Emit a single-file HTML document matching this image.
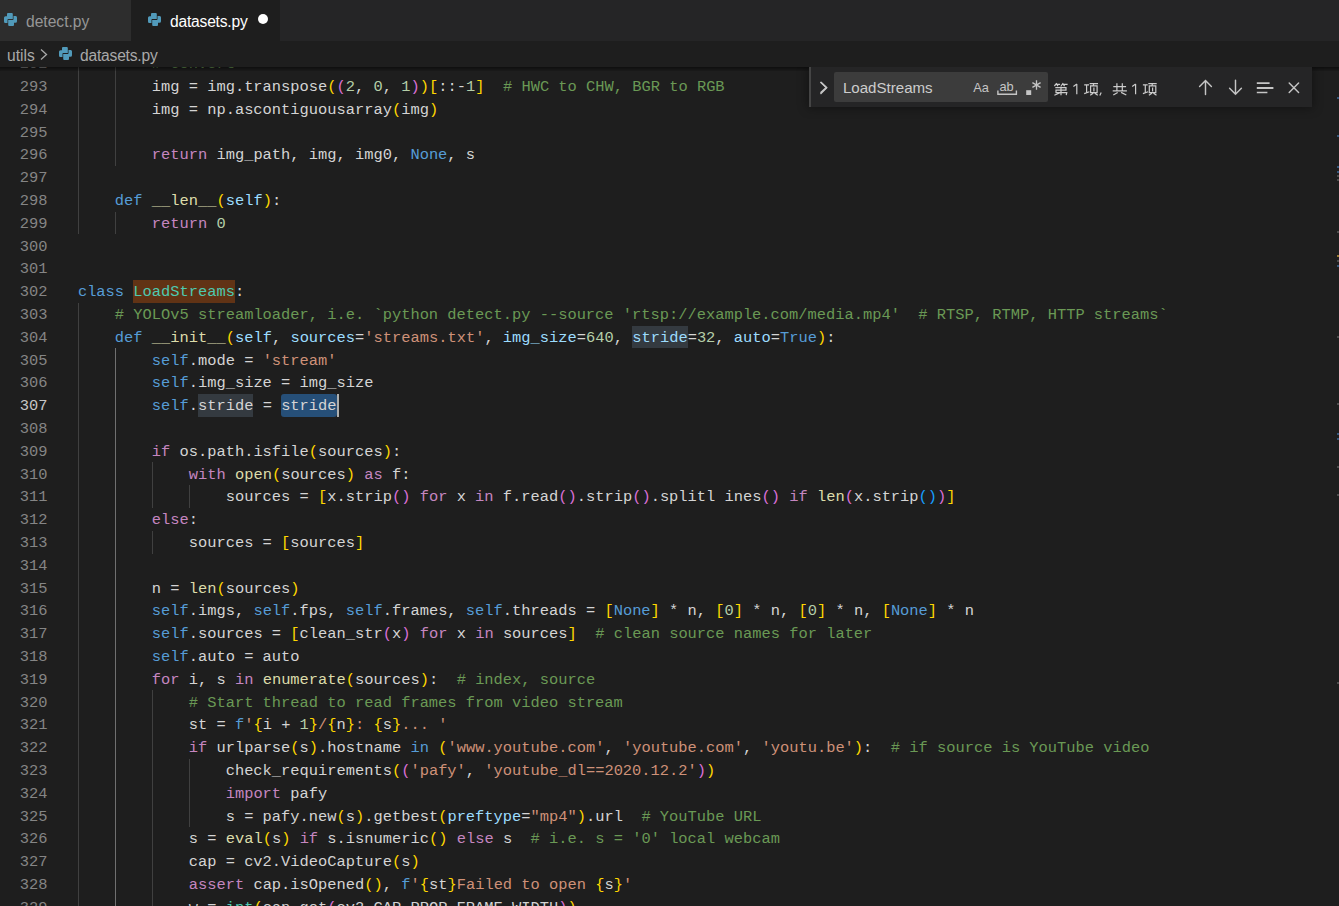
<!DOCTYPE html>
<html><head><meta charset="utf-8"><style>
*{margin:0;padding:0;box-sizing:border-box}
html,body{width:1339px;height:906px;overflow:hidden;background:#1e1e1e}
body{position:relative;font-family:"Liberation Sans",sans-serif}
#tabs{position:absolute;left:0;top:0;width:1339px;height:41px;background:#252526}
.tab{position:absolute;top:0;height:41px}
.tab svg{position:absolute;top:13px}
.tab .lbl{position:absolute;top:11.7px;font-size:15.6px;line-height:20px;white-space:pre}
#t1{left:0;width:131px;background:#2d2d2d}
#t1 svg{left:4px}
#t1 .lbl{left:26px;color:#969696}
#t2{left:131px;width:149px;background:#1e1e1e}
#t2 svg{left:17px}
#t2 .lbl{left:39px;color:#ffffff}
#t2 .dot{position:absolute;left:126.8px;top:13.8px;width:10.6px;height:10.6px;border-radius:50%;background:#ffffff}
#bc{position:absolute;left:0;top:41px;width:1339px;height:26px;background:#1e1e1e}
#bc .lbl{position:absolute;top:4.5px;font-size:15.6px;line-height:20px;color:#a9a9a9;white-space:pre}
#bc svg{position:absolute}
#ed{position:absolute;left:0;top:67px;width:1339px;height:839px;overflow:hidden;background:#1e1e1e}
.ln{position:absolute;left:0;width:47.5px;text-align:right;height:22.8px;line-height:22.8px;font-family:"Liberation Mono",monospace;font-size:15.4px;color:#858585;white-space:pre}
.ln.act{color:#c6c6c6}
.cl{position:absolute;left:77.9px;height:22.8px;line-height:22.8px;font-family:"Liberation Mono",monospace;font-size:15.4px;color:#d4d4d4;white-space:pre}
.ig{position:absolute;width:1px;background:#404040}
.ig.ga{background:#707070}
.hm,.hw,.hs{position:absolute;height:22.8px}
.hm{background:#613315}
.hw{background:#343a40}
.hs{background:#264f78;border-radius:3px}
.cur{position:absolute;width:2px;height:22.8px;background:#aeafad}
.tk{color:#c586c0}.ts{color:#569cd6}.tt{color:#ce9178}.tc{color:#6a9955}.tn{color:#b5cea8}
.tf{color:#dcdcaa}.ty{color:#4ec9b0}.tp{color:#9cdcfe}
.t1{color:#ffd700}.t2{color:#da70d6}.t3{color:#179fff}
.tM,.tH,.tS{}
#shadow{position:absolute;left:0;top:0;width:1339px;height:4px;box-shadow:#000 0 7px 7px -7px inset}
.rm{position:absolute;left:1337px;width:2px;height:2px}
.rb{background:#35577c}.rg{background:#4c4c4c}.ro{background:#9a7a30}
#find{position:absolute;left:809px;top:0;width:503px;height:40px;background:#252526;box-shadow:0 0 9.6px 2.4px rgba(0,0,0,.36)}
#find .sash{position:absolute;left:0;top:0;width:2px;height:40px;background:#454545}
#find .inp{position:absolute;left:25px;top:5px;width:214px;height:30px;background:#3c3c3c;border-radius:2px}
#find .q{position:absolute;left:8.9px;top:6.3px;font-size:15.1px;line-height:20px;color:#cccccc;white-space:pre}
#find svg{position:absolute}
</style></head><body>
<div id="tabs">
 <div class="tab" id="t1"><svg width="13" height="13" viewBox="0 0 26 26"><path fill="#519aba" d="M8,0H15.6Q17.6,0 17.6,2V12.2H8.4Q7,12.2 7,13.6V20H2.5Q0,20 0,17V9.4Q0,6.4 3,6.4H6V2Q6,0 8,0Z"/><path fill="#519aba" d="M18,26H10.4Q8.4,26 8.4,24V13.8H17.6Q19,13.8 19,12.4V6H23.5Q26,6 26,9V16.6Q26,19.6 23,19.6H20V24Q20,26 18,26Z"/></svg><div class="lbl">detect.py</div></div>
 <div class="tab" id="t2"><svg width="13" height="13" viewBox="0 0 26 26"><path fill="#519aba" d="M8,0H15.6Q17.6,0 17.6,2V12.2H8.4Q7,12.2 7,13.6V20H2.5Q0,20 0,17V9.4Q0,6.4 3,6.4H6V2Q6,0 8,0Z"/><path fill="#519aba" d="M18,26H10.4Q8.4,26 8.4,24V13.8H17.6Q19,13.8 19,12.4V6H23.5Q26,6 26,9V16.6Q26,19.6 23,19.6H20V24Q20,26 18,26Z"/></svg><div class="lbl" style="letter-spacing:-0.2px">datasets.py</div><div class="dot"></div></div>
</div>
<div id="bc">
 <div class="lbl" style="left:7px">utils</div>
 <svg style="left:39px;top:7px" width="10" height="13" viewBox="0 0 10 13"><path d="M2 1.5l5.5 5-5.5 5" fill="none" stroke="#a9a9a9" stroke-width="1.3"/></svg>
 <div style="position:absolute;left:59px;top:6px"><svg width="13" height="13" viewBox="0 0 26 26"><path fill="#519aba" d="M8,0H15.6Q17.6,0 17.6,2V12.2H8.4Q7,12.2 7,13.6V20H2.5Q0,20 0,17V9.4Q0,6.4 3,6.4H6V2Q6,0 8,0Z"/><path fill="#519aba" d="M18,26H10.4Q8.4,26 8.4,24V13.8H17.6Q19,13.8 19,12.4V6H23.5Q26,6 26,9V16.6Q26,19.6 23,19.6H20V24Q20,26 18,26Z"/></svg></div>
 <div class="lbl" style="left:80px;letter-spacing:-0.2px">datasets.py</div>
</div>
<div id="ed">
<div class="hm" style="left:133.34px;top:213.00px;width:101.64px"></div>
<div class="hw" style="left:632.30px;top:258.60px;width:55.44px"></div>
<div class="hw" style="left:198.02px;top:327.00px;width:55.44px"></div>
<div class="hs" style="left:281.18px;top:327.00px;width:55.44px"></div>
<div class="ln" style="top:-13.80px">292</div>
<div class="cl" style="top:-13.80px">        <span class="tc"># Convert</span></div>
<div class="ln" style="top:9.00px">293</div>
<div class="cl" style="top:9.00px">        img = img.transpose<span class="t1">(</span><span class="t2">(</span><span class="tn">2</span>, <span class="tn">0</span>, <span class="tn">1</span><span class="t2">)</span><span class="t1">)</span><span class="t1">[</span>::-<span class="tn">1</span><span class="t1">]</span>  <span class="tc"># HWC to CHW, BGR to RGB</span></div>
<div class="ln" style="top:31.80px">294</div>
<div class="cl" style="top:31.80px">        img = np.ascontiguousarray<span class="t1">(</span>img<span class="t1">)</span></div>
<div class="ln" style="top:54.60px">295</div>
<div class="ln" style="top:77.40px">296</div>
<div class="cl" style="top:77.40px">        <span class="tk">return</span> img_path, img, img0, <span class="ts">None</span>, s</div>
<div class="ln" style="top:100.20px">297</div>
<div class="ln" style="top:123.00px">298</div>
<div class="cl" style="top:123.00px">    <span class="ts">def</span> <span class="tf">__len__</span><span class="t1">(</span><span class="tp">self</span><span class="t1">)</span>:</div>
<div class="ln" style="top:145.80px">299</div>
<div class="cl" style="top:145.80px">        <span class="tk">return</span> <span class="tn">0</span></div>
<div class="ln" style="top:168.60px">300</div>
<div class="ln" style="top:191.40px">301</div>
<div class="ln" style="top:214.20px">302</div>
<div class="cl" style="top:214.20px"><span class="ts">class</span> <span class="tM"><span class="ty">LoadStreams</span></span>:</div>
<div class="ln" style="top:237.00px">303</div>
<div class="cl" style="top:237.00px">    <span class="tc"># YOLOv5 streamloader, i.e. `python detect.py --source &#x27;rtsp://example.com/media.mp4&#x27;  # RTSP, RTMP, HTTP streams`</span></div>
<div class="ln" style="top:259.80px">304</div>
<div class="cl" style="top:259.80px">    <span class="ts">def</span> <span class="tf">__init__</span><span class="t1">(</span><span class="tp">self</span>, <span class="tp">sources</span>=<span class="tt">&#x27;streams.txt&#x27;</span>, <span class="tp">img_size</span>=<span class="tn">640</span>, <span class="tH"><span class="tp">stride</span></span>=<span class="tn">32</span>, <span class="tp">auto</span>=<span class="ts">True</span><span class="t1">)</span>:</div>
<div class="ln" style="top:282.60px">305</div>
<div class="cl" style="top:282.60px">        <span class="ts">self</span>.mode = <span class="tt">&#x27;stream&#x27;</span></div>
<div class="ln" style="top:305.40px">306</div>
<div class="cl" style="top:305.40px">        <span class="ts">self</span>.img_size = img_size</div>
<div class="ln act" style="top:328.20px">307</div>
<div class="cl" style="top:328.20px">        <span class="ts">self</span>.<span class="tH">stride</span> = <span class="tS">stride</span></div>
<div class="ln" style="top:351.00px">308</div>
<div class="ln" style="top:373.80px">309</div>
<div class="cl" style="top:373.80px">        <span class="tk">if</span> os.path.isfile<span class="t1">(</span>sources<span class="t1">)</span>:</div>
<div class="ln" style="top:396.60px">310</div>
<div class="cl" style="top:396.60px">            <span class="tk">with</span> <span class="tf">open</span><span class="t1">(</span>sources<span class="t1">)</span> <span class="tk">as</span> f:</div>
<div class="ln" style="top:419.40px">311</div>
<div class="cl" style="top:419.40px">                sources = <span class="t1">[</span>x.strip<span class="t2">()</span> <span class="tk">for</span> x <span class="tk">in</span> f.read<span class="t2">()</span>.strip<span class="t2">()</span>.splitl ines<span class="t2">()</span> <span class="tk">if</span> <span class="tf">len</span><span class="t2">(</span>x.strip<span class="t3">()</span><span class="t2">)</span><span class="t1">]</span></div>
<div class="ln" style="top:442.20px">312</div>
<div class="cl" style="top:442.20px">        <span class="tk">else</span>:</div>
<div class="ln" style="top:465.00px">313</div>
<div class="cl" style="top:465.00px">            sources = <span class="t1">[</span>sources<span class="t1">]</span></div>
<div class="ln" style="top:487.80px">314</div>
<div class="ln" style="top:510.60px">315</div>
<div class="cl" style="top:510.60px">        n = <span class="tf">len</span><span class="t1">(</span>sources<span class="t1">)</span></div>
<div class="ln" style="top:533.40px">316</div>
<div class="cl" style="top:533.40px">        <span class="ts">self</span>.imgs, <span class="ts">self</span>.fps, <span class="ts">self</span>.frames, <span class="ts">self</span>.threads = <span class="t1">[</span><span class="ts">None</span><span class="t1">]</span> * n, <span class="t1">[</span><span class="tn">0</span><span class="t1">]</span> * n, <span class="t1">[</span><span class="tn">0</span><span class="t1">]</span> * n, <span class="t1">[</span><span class="ts">None</span><span class="t1">]</span> * n</div>
<div class="ln" style="top:556.20px">317</div>
<div class="cl" style="top:556.20px">        <span class="ts">self</span>.sources = <span class="t1">[</span>clean_str<span class="t2">(</span>x<span class="t2">)</span> <span class="tk">for</span> x <span class="tk">in</span> sources<span class="t1">]</span>  <span class="tc"># clean source names for later</span></div>
<div class="ln" style="top:579.00px">318</div>
<div class="cl" style="top:579.00px">        <span class="ts">self</span>.auto = auto</div>
<div class="ln" style="top:601.80px">319</div>
<div class="cl" style="top:601.80px">        <span class="tk">for</span> i, s <span class="tk">in</span> <span class="tf">enumerate</span><span class="t1">(</span>sources<span class="t1">)</span>:  <span class="tc"># index, source</span></div>
<div class="ln" style="top:624.60px">320</div>
<div class="cl" style="top:624.60px">            <span class="tc"># Start thread to read frames from video stream</span></div>
<div class="ln" style="top:647.40px">321</div>
<div class="cl" style="top:647.40px">            st = <span class="ts">f</span><span class="tt">&#x27;</span><span class="t1">{</span>i + <span class="tn">1</span><span class="t1">}</span><span class="tt">/</span><span class="t1">{</span>n<span class="t1">}</span><span class="tt">: </span><span class="t1">{</span>s<span class="t1">}</span><span class="tt">... &#x27;</span></div>
<div class="ln" style="top:670.20px">322</div>
<div class="cl" style="top:670.20px">            <span class="tk">if</span> urlparse<span class="t1">(</span>s<span class="t1">)</span>.hostname <span class="ts">in</span> <span class="t1">(</span><span class="tt">&#x27;www.youtube.com&#x27;</span>, <span class="tt">&#x27;youtube.com&#x27;</span>, <span class="tt">&#x27;youtu.be&#x27;</span><span class="t1">)</span>:  <span class="tc"># if source is YouTube video</span></div>
<div class="ln" style="top:693.00px">323</div>
<div class="cl" style="top:693.00px">                check_requirements<span class="t1">(</span><span class="t2">(</span><span class="tt">&#x27;pafy&#x27;</span>, <span class="tt">&#x27;youtube_dl==2020.12.2&#x27;</span><span class="t2">)</span><span class="t1">)</span></div>
<div class="ln" style="top:715.80px">324</div>
<div class="cl" style="top:715.80px">                <span class="tk">import</span> pafy</div>
<div class="ln" style="top:738.60px">325</div>
<div class="cl" style="top:738.60px">                s = pafy.new<span class="t1">(</span>s<span class="t1">)</span>.getbest<span class="t1">(</span><span class="tp">preftype</span>=<span class="tt">&quot;mp4&quot;</span><span class="t1">)</span>.url  <span class="tc"># YouTube URL</span></div>
<div class="ln" style="top:761.40px">326</div>
<div class="cl" style="top:761.40px">            s = <span class="tf">eval</span><span class="t1">(</span>s<span class="t1">)</span> <span class="tk">if</span> s.isnumeric<span class="t1">()</span> <span class="tk">else</span> s  <span class="tc"># i.e. s = &#x27;0&#x27; local webcam</span></div>
<div class="ln" style="top:784.20px">327</div>
<div class="cl" style="top:784.20px">            cap = cv2.VideoCapture<span class="t1">(</span>s<span class="t1">)</span></div>
<div class="ln" style="top:807.00px">328</div>
<div class="cl" style="top:807.00px">            <span class="tk">assert</span> cap.isOpened<span class="t1">()</span>, <span class="ts">f</span><span class="tt">&#x27;</span><span class="t1">{</span>st<span class="t1">}</span><span class="tt">Failed to open </span><span class="t1">{</span>s<span class="t1">}</span><span class="tt">&#x27;</span></div>
<div class="ln" style="top:829.80px">329</div>
<div class="cl" style="top:829.80px">            w = <span class="ty">int</span><span class="t1">(</span>cap.get<span class="t2">(</span>cv2.CAP_PROP_FRAME_WIDTH<span class="t2">)</span><span class="t1">)</span></div>
<div class="ig" style="left:78px;top:-15.00px;height:182.40px"></div>
<div class="ig" style="left:115px;top:-15.00px;height:114.00px"></div>
<div class="ig" style="left:115px;top:144.60px;height:22.80px"></div>
<div class="ig" style="left:78px;top:235.80px;height:615.60px"></div>
<div class="ig ga" style="left:115px;top:281.40px;height:570.00px"></div>
<div class="ig" style="left:152px;top:395.40px;height:45.60px"></div>
<div class="ig" style="left:152px;top:463.80px;height:22.80px"></div>
<div class="ig" style="left:152px;top:623.40px;height:228.00px"></div>
<div class="ig" style="left:189px;top:418.20px;height:22.80px"></div>
<div class="ig" style="left:189px;top:691.80px;height:68.40px"></div>
<div class="cur" style="left:336.62px;top:327.00px"></div>
<div id="shadow"></div>
<div class="rm rb" style="top:30px"></div>
<div class="rm rb" style="top:68px"></div>
<div class="rm rb" style="top:99px"></div>
<div class="rm rb" style="top:104px"></div>
<div class="rm rg" style="top:108px"></div>
<div class="rm rg" style="top:112px"></div>
<div class="rm rg" style="top:164px"></div>
<div class="rm ro" style="top:188px"></div>
<div class="rm rg" style="top:193px"></div>
<div class="rm rb" style="top:198px"></div>
<div class="rm rg" style="top:269px"></div>
<div class="rm rg" style="top:336px"></div>
<div class="rm rb" style="top:366px"></div>
<div class="rm rb" style="top:371px"></div>
<div class="rm rg" style="top:399px"></div>
<div class="rm rg" style="top:427px"></div>
<div class="rm rg" style="top:615px"></div>
<div id="find">
 <div class="sash"></div>
 <svg style="left:10px;top:14px" width="10" height="14" viewBox="0 0 10 14"><path d="M1.5 1l6 6-6 6" fill="none" stroke="#c5c5c5" stroke-width="1.3"/></svg>
 <div class="inp"><div class="q">LoadStreams</div></div>
<svg style="left:0;top:0" width="503" height="40" viewBox="0 0 503 40">
<g fill="none" stroke="#c5c5c5" stroke-width="1.45" stroke-linecap="round">
<path d="M12,15.4L17.6,20.4L12,25.4"/>
<path d="M396.5,13.6V27.6M390.6,19.6L396.5,13.6L402.4,19.6"/>
<path d="M426.5,13.2V27.2M420.6,21.2L426.5,27.2L432.4,21.2"/>
<path d="M480.2,16L489.6,25.4M480.2,25.4L489.6,16"/>
</g>
<g fill="none" stroke="#c5c5c5" stroke-width="1.8">
<path d="M447.8,16.1H460.6M447.8,21H464.4"/>
</g>
<path d="M447.8,25.5H458.4" fill="none" stroke="#c5c5c5" stroke-width="1.5"/>
<g fill="none" stroke="#c5c5c5" stroke-width="1.4">
<path d="M188.9,23.6V27.2H207.4V23.6"/>
</g>
<rect x="217.2" y="23.2" width="5" height="4.8" fill="#c5c5c5"/>
<g fill="none" stroke="#c5c5c5" stroke-width="1.3">
<path d="M227.5,13.2V22.8M223.4,15.6L231.6,20.4M223.4,20.4L231.6,15.6"/>
</g>
<text x="164.2" y="24.7" font-family="Liberation Sans" font-size="12.8" fill="#c5c5c5">Aa</text>
<text x="190.4" y="23.9" font-family="Liberation Sans" font-size="12.8" fill="#c5c5c5">ab</text>
<g fill="none" stroke="#cccccc" stroke-width="1.2">
<path d="M247.8,16.2L245.4,19.0M246.6,17.3H251.1M248.0,17.8L249.0,19.2M254.2,16.2L252.0,19.0M253.2,17.3H258.6M254.6,17.8L255.6,19.2M246.3,20.6H257.0V23.2H247.0V25.6H257.8L257.2,28.2M252.0,19.6V28.3M251.0,25.8L245.4,28.2M267.8,17.0V27.3M264.4,19.4L267.8,17.0M275.2,17.8H280.0M277.6,17.8V25.4M275.2,26.6L280.4,24.8M280.6,16.7H289.0M284.8,16.7L284.2,18.6M281.6,18.8H288.1V25.6H281.6ZM284.9,20.4V24.6M284.2,26.2L281.2,28.2M285.8,26.2L288.8,28.2M292.2,25.6L290.8,28.6M307.9,16.2V23.8M313.3,16.2V23.8M304.3,19.7H317.1M303.7,23.8H317.9M308.7,25.4L304.3,28.0M312.1,25.4L317.3,28.0M326.6,17.0V27.3M323.2,19.4L326.6,17.0M333.9,17.8H338.7M336.3,17.8V25.4M333.9,26.6L339.1,24.8M339.3,16.7H347.7M343.5,16.7L342.9,18.6M340.3,18.8H346.8V25.6H340.3ZM343.6,20.4V24.6M342.9,26.2L339.9,28.2M344.5,26.2L347.5,28.2"/>
</g>
</svg>
</div>
</div>
</body></html>
